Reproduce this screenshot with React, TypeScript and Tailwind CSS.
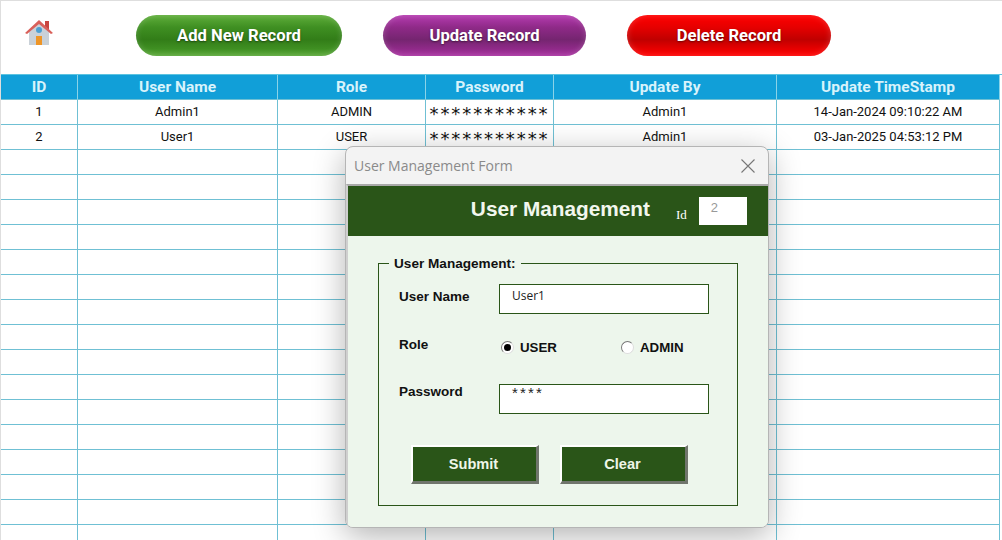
const rows = [
  { id: '1', name: 'Admin1', role: 'ADMIN', password: '***********', by: 'Admin1', stamp: '14-Jan-2024 09:10:22 AM' },
  { id: '2', name: 'User1', role: 'USER', password: '***********', by: 'Admin1', stamp: '03-Jan-2025 04:53:12 PM' },
];
const headers = ['ID', 'User Name', 'Role', 'Password', 'Update By', 'Update TimeStamp'];
const gridCols = 'grid grid-cols-[77px_200px_148px_128px_223px_223px]';

function HomeIcon() {
  return (
    <svg width="30" height="28" viewBox="0 0 30 28" className="block">
      <rect x="21" y="3" width="4" height="9" fill="#c8453f" />
      <path d="M5 13 L15 4 L25 13 V27 H5 Z" fill="#c9d1d8" />
      <path d="M1 15 L15 2 L29 15 L27 16 L15 6 L3 16 Z" fill="#d9605a" />
      <circle cx="15" cy="12" r="3" fill="#4d9fd0" />
      <rect x="12" y="18" width="6" height="9" fill="#ee9526" />
    </svg>
  );
}

function PillButton({ label, width, tone }: { label: string; width: string; tone: string }) {
  return (
    <button className={`h-[41px] pt-[1px] rounded-full text-white text-[16.6px] font-bold [font-family:Roboto,sans-serif] [text-shadow:0_1px_2px_rgba(0,0,0,0.45)] shadow-[inset_0_0_6px_rgba(255,255,255,0.2)] ${width} ${tone}`}>
      {label}
    </button>
  );
}

function Radio({ checked, label }: { checked?: boolean; label: string }) {
  return (
    <div className="flex items-center gap-[6px] w-[120px] shrink-0">
      <span className="w-[13px] h-[13px] rounded-full bg-white border border-[#777] border-r-[#ddd] border-b-[#ddd] flex items-center justify-center">
        {checked && <span className="w-[7px] h-[7px] rounded-full bg-black" />}
      </span>
      <span className="text-[13.3px] font-bold text-[#111]">{label}</span>
    </div>
  );
}

function Field({ value, stars }: { value: string; stars?: boolean }) {
  return (
    <div className={`w-[210px] h-[30px] bg-white border border-[#2a5518] pl-[12px] text-[#222] ${stars ? "text-[15px] leading-[16px] tracking-[2.2px] [font-family:'Liberation_Sans',sans-serif]" : "pt-[2px] text-[12px] [font-family:'Open_Sans',sans-serif]"}`}>
      {value}
    </div>
  );
}

function FormButton({ label }: { label: string }) {
  return (
    <button className="w-[128px] h-[39px] pt-[1px] pr-[2px] bg-[#2a5518] text-[#eef6e8] text-[14.6px] font-bold border-t-2 border-l-2 border-t-white border-l-white border-r-[3px] border-b-[3px] border-r-[#70756c] border-b-[#70756c]">
      {label}
    </button>
  );
}

export default function App() {
  return (
    <div className="relative w-[1002px] h-[540px] overflow-hidden bg-white border-t border-l border-[#dedede] [font-family:Roboto,sans-serif]">
      {/* Toolbar */}
      <div className="h-[73px] flex items-start pt-[14px] pl-[23px]">
        <div className="w-[30px] mt-[3px] mr-[82px]">
          <HomeIcon />
        </div>
        <div className="flex gap-[41px]">
          <PillButton label="Add New Record" width="w-[206px]" tone="bg-[linear-gradient(#5fae3a,#3f8f22_30%,#327d18_60%,#3f8f22_82%,#5aa838)]" />
          <PillButton label="Update Record" width="w-[203px]" tone="bg-[linear-gradient(#b53bb0,#8f2a88_30%,#752570_60%,#8f2a88_82%,#a830a0)]" />
          <PillButton label="Delete Record" width="w-[204px]" tone="bg-[linear-gradient(#ff0000,#e60000_30%,#c00000_60%,#e60000_82%,#ff0000)]" />
        </div>
      </div>

      {/* Sheet */}
      <div className="border-t border-[#5cc3e0]">
        <div className={gridCols}>
          {headers.map((h) => (
            <div key={h} className="h-[25px] pt-[1px] bg-[#119fd8] text-[#d8f3fb] text-[15.5px] font-bold flex items-center justify-center border-r border-b border-r-[#8ad3e8] border-b-[#6fc0d4]">
              {h}
            </div>
          ))}
        </div>
        {rows.map((r) => (
          <div key={r.id} className={gridCols}>
            {[r.id, r.name, r.role].map((v, i) => (
              <div key={i} className="h-[25px] text-[13px] text-[#111] flex items-center justify-center border-r border-b border-[#6fc0d4]">{v}</div>
            ))}
            <div className="h-[25px] text-[18px] tracking-[1.9px] text-[#111] [font-family:'DejaVu_Sans',sans-serif] flex items-start justify-center border-r border-b border-[#6fc0d4]">{r.password}</div>
            {[r.by, r.stamp].map((v, i) => (
              <div key={i} className="h-[25px] text-[13px] text-[#111] flex items-center justify-center border-r border-b border-[#6fc0d4]">{v}</div>
            ))}
          </div>
        ))}
        {Array.from({ length: 16 }).map((_, n) => (
          <div key={n} className={gridCols}>
            {headers.map((h) => (
              <div key={h} className="h-[25px] border-r border-b border-[#6fc0d4]" />
            ))}
          </div>
        ))}
      </div>

      {/* Dialog */}
      <div className="absolute left-[344px] top-[145px] w-[424px] h-[382px] rounded-lg bg-[#f3f3f3] border border-[#b5b5b5] shadow-[0_8px_32px_rgba(0,0,0,0.3)] flex flex-col overflow-hidden">
        <div className="h-[37px] shrink-0 flex items-center justify-between pl-[8px] pr-[13px] text-[14px] text-[#8a8a8a] [font-family:'Open_Sans',sans-serif]">
          <span>User Management Form</span>
          <svg width="14" height="14" viewBox="0 0 14 14" stroke="#777" strokeWidth="1.1" fill="none">
            <path d="M0.5 0.5 L13.5 13.5 M13.5 0.5 L0.5 13.5" />
          </svg>
        </div>
        <div className="flex-1 flex flex-col border-t-2 border-t-[#a9a9a9] border-l-[2px] border-l-[#cfcfcf] [font-family:'Liberation_Sans',Arial,sans-serif]">
          <div className="h-[50px] shrink-0 bg-[#2a5518] flex items-center">
            <div className="w-[302px] mb-[5px] text-right text-[20.8px] font-bold text-[#f2f7ee]">User Management</div>
            <span className="ml-[26px] mt-[8px] text-[13px] text-white [font-family:'Liberation_Serif',serif]">Id</span>
            <div className="ml-[12px] w-[48px] h-[28px] bg-white pl-[12px] pt-[1px] text-[13px] text-[#999]">2</div>
          </div>
          <div className="flex-1 bg-[#edf6ec] pl-[30px] pt-[18px]">
            <fieldset className="w-[360px] h-[252px] border border-[#2a5518] pl-[20px] min-w-0">
              <legend className="ml-[-10px] px-[5px] pt-[2px] text-[13.6px] leading-[16px] font-bold text-[#111]">User Management:</legend>
              <div className="flex mt-[12px] h-[30px]">
                <div className="w-[100px] pt-[3px] text-[13.5px] font-bold text-[#111]">User Name</div>
                <Field value="User1" />
              </div>
              <div className="flex mt-[17px] h-[36px]">
                <div className="w-[102px] shrink-0 pt-[4px] text-[13.5px] font-bold text-[#111]">Role</div>
                <div className="flex -mt-[3px]">
                  <Radio checked label="USER" />
                  <Radio label="ADMIN" />
                </div>
              </div>
              <div className="flex mt-[17px] h-[30px]">
                <div className="w-[100px] mt-[1px] leading-[14px] text-[13.5px] font-bold text-[#111]">Password</div>
                <Field value="****" stars />
              </div>
              <div className="flex gap-[21px] mt-[31px] ml-[12px]">
                <FormButton label="Submit" />
                <FormButton label="Clear" />
              </div>
            </fieldset>
          </div>
        </div>
      </div>
    </div>
  );
}
